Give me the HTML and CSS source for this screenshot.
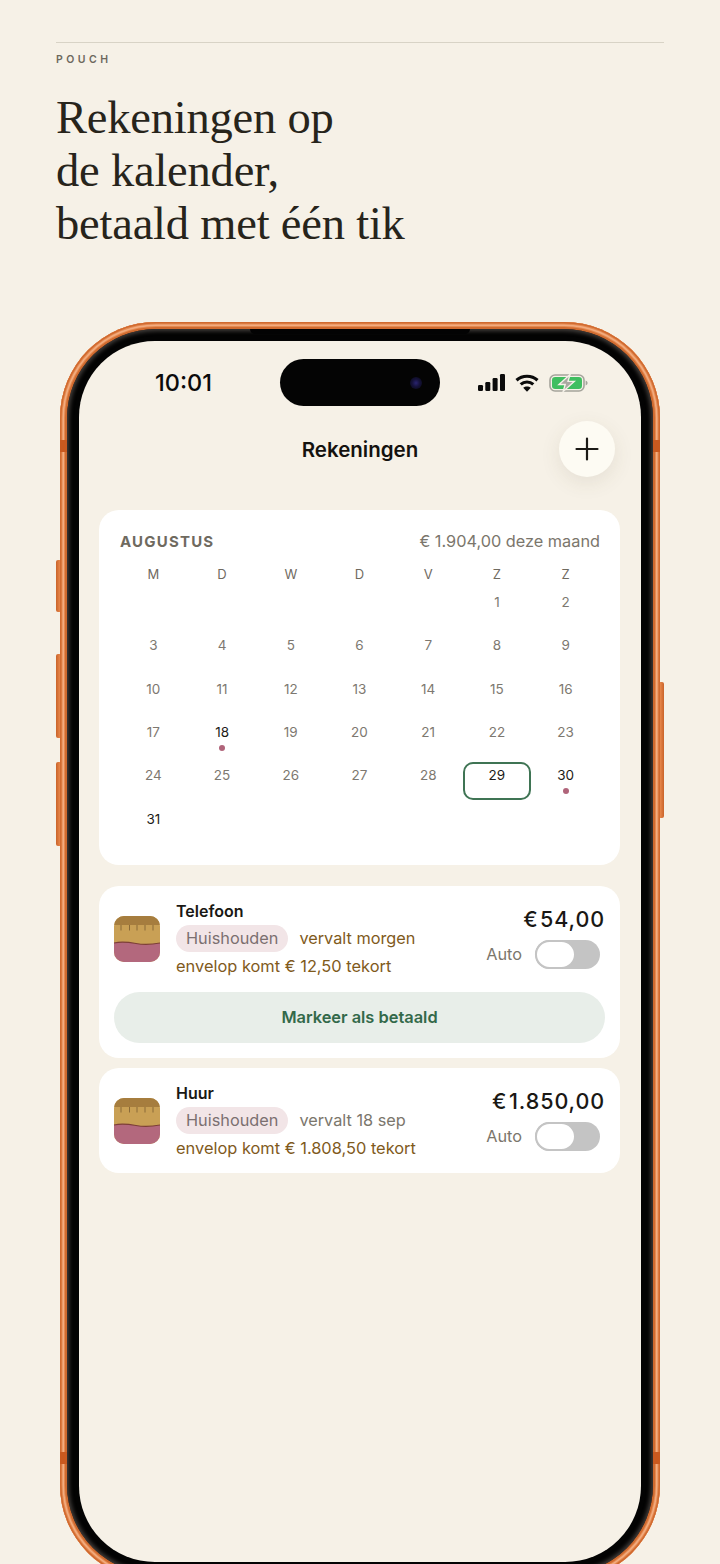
FILE: index.html
```html
<!DOCTYPE html>
<html lang="nl">
<head>
<meta charset="UTF-8" />
<meta name="viewport" content="width=device-width, initial-scale=1.0"/>
<title>Pouch - Rekeningen</title>
<link rel="stylesheet" href="styles.css">
</head>
<body>

<header class="intro">
  <div class="brand">POUCH</div>
  <h1>Rekeningen op<br>de kalender,<br>betaald met één tik</h1>
</header>

<div class="phone">
  <span class="side-btn btn-a"></span>
  <span class="side-btn btn-b"></span>
  <span class="side-btn btn-c"></span>
  <span class="side-btn btn-d"></span>
  <span class="band band-tl"></span>
  <span class="band band-tr"></span>
  <span class="band band-bl"></span>
  <span class="band band-br"></span>

  <div class="bezel">
    <span class="speaker"></span>
    <div class="screen">

      <div class="status">
        <div class="time">10:01</div>
        <div class="island"><span class="lens"></span></div>
        <div class="status-icons">
          <svg width="27" height="17" viewBox="0 0 27 17" fill="#0b0b0b">
            <rect x="0" y="11" width="5" height="6" rx="1.2"/>
            <rect x="7.3" y="8" width="5" height="9" rx="1.2"/>
            <rect x="14.6" y="4" width="5" height="13" rx="1.2"/>
            <rect x="22" y="0" width="5" height="17" rx="1.2"/>
          </svg>
          <svg width="24" height="18" viewBox="0 0 24 18" fill="none" stroke="#0b0b0b" stroke-width="3.200">
            <path d="M1.500 6.200C7.400 .9 16.600 .9 22.500 6.200"/>
            <path d="M5.700 10.400c3.600-3.200 9-3.200 12.600 0"/>
            <path d="M12 17.800l-3.800-4.100c2.100-1.700 5.500-1.700 7.600 0z" fill="#0b0b0b" stroke="none"/>
          </svg>
          <svg width="39" height="18" viewBox="0 0 39 18">
            <rect x="1" y="1" width="34" height="16" rx="5" fill="none" stroke="#a5a49c" stroke-width="1.600"/>
            <rect x="3" y="3" width="30" height="12" rx="3.200" fill="#3fbe60"/>
            <path d="M36.600 6.500c1.200.4 2 1.400 2 2.500s-.8 2.100-2 2.500z" fill="#a5a49c"/>
            <path d="M21 .6L10 10.500h6.200l-2 6.900 11-10h-6.200z" fill="#a9a9a2" stroke="#f5f1e8" stroke-width="1.400"/>
          </svg>
        </div>
      </div>

      <div class="nav">
        <div class="nav-title">Rekeningen</div>
        <button class="add" type="button" aria-label="Toevoegen">
          <svg width="24" height="24" viewBox="0 0 24 24" stroke="#1c1a16" stroke-width="2.200" stroke-linecap="round">
            <path d="M12 1.500v21M1.500 12h21"/>
          </svg>
        </button>
      </div>

      <section class="calendar">
        <div class="cal-head">
          <span class="month">AUGUSTUS</span>
          <span class="month-total">€ 1.904,00 deze maand</span>
        </div>
        <div class="weekdays">
          <span>M</span><span>D</span><span>W</span><span>D</span><span>V</span><span>Z</span><span>Z</span>
        </div>
        <div class="days">
          <div class="day"></div><div class="day"></div><div class="day"></div><div class="day"></div><div class="day"></div>
          <div class="day">1</div><div class="day">2</div>
          <div class="day">3</div><div class="day">4</div><div class="day">5</div><div class="day">6</div><div class="day">7</div><div class="day">8</div><div class="day">9</div>
          <div class="day">10</div><div class="day">11</div><div class="day">12</div><div class="day">13</div><div class="day">14</div><div class="day">15</div><div class="day">16</div>
          <div class="day">17</div><div class="day due">18<i class="dot"></i></div><div class="day">19</div><div class="day">20</div><div class="day">21</div><div class="day">22</div><div class="day">23</div>
          <div class="day">24</div><div class="day">25</div><div class="day">26</div><div class="day">27</div><div class="day">28</div><div class="day today">29</div><div class="day due">30<i class="dot"></i></div>
          <div class="day due">31</div>
        </div>
      </section>

      <section class="bill">
        <div class="bill-row">
          <svg class="pouch" width="46" height="46" viewBox="0 0 46 46">
            <defs><clipPath id="pouch-a"><rect width="46" height="46" rx="10"/></clipPath></defs>
            <g clip-path="url(#pouch-a)">
              <rect width="46" height="46" fill="#c9a055"/>
              <rect width="46" height="9" fill="#a67d3e"/>
              <path d="M0 27c8-2 14-1 22 .5s16 1 24-.5v20H0z" fill="#b3687d"/>
              <path d="M0 27c8-2 14-1 22 .5s16 1 24-.5" fill="none" stroke="#7d3f38" stroke-width="1.200"/>
              <path d="M7 9v5.500M15.500 9v5.500M23 9v5.500M31 9v5.500M39 9v5.500" stroke="#8a6a38" stroke-width="1"/>
            </g>
          </svg>
          <div class="bill-info">
            <div class="bill-name">Telefoon</div>
            <div class="bill-meta"><span class="chip">Huishouden</span><span class="due-text">vervalt morgen</span></div>
            <div class="short">envelop komt € 12,50 tekort</div>
          </div>
          <div class="bill-side">
            <div class="amount">€ 54,00</div>
            <div class="auto"><span>Auto</span><span class="toggle"></span></div>
          </div>
        </div>
        <button class="pay" type="button">Markeer als betaald</button>
      </section>

      <section class="bill">
        <div class="bill-row">
          <svg class="pouch" width="46" height="46" viewBox="0 0 46 46">
            <defs><clipPath id="pouch-b"><rect width="46" height="46" rx="10"/></clipPath></defs>
            <g clip-path="url(#pouch-b)">
              <rect width="46" height="46" fill="#c9a055"/>
              <rect width="46" height="9" fill="#a67d3e"/>
              <path d="M0 27c8-2 14-1 22 .5s16 1 24-.5v20H0z" fill="#b3687d"/>
              <path d="M0 27c8-2 14-1 22 .5s16 1 24-.5" fill="none" stroke="#7d3f38" stroke-width="1.200"/>
              <path d="M7 9v5.500M15.500 9v5.500M23 9v5.500M31 9v5.500M39 9v5.500" stroke="#8a6a38" stroke-width="1"/>
            </g>
          </svg>
          <div class="bill-info">
            <div class="bill-name">Huur</div>
            <div class="bill-meta"><span class="chip">Huishouden</span><span class="due-text plain">vervalt 18 sep</span></div>
            <div class="short">envelop komt € 1.808,50 tekort</div>
          </div>
          <div class="bill-side">
            <div class="amount">€ 1.850,00</div>
            <div class="auto"><span>Auto</span><span class="toggle"></span></div>
          </div>
        </div>
      </section>

    </div>
  </div>
</div>

</body>
</html>
```

FILE: styles.css
```css
html, body {
  margin: 0;
  height: 1564px;
  overflow: hidden;
}

body {
  background: #f6f1e7;
  font-family: Inter, "Noto Sans", sans-serif;
  color: #1a1814;
}

/* intro */
.intro {
  margin: 42px 56px 0;
  border-top: 1px solid #d8d3c6;
  padding-top: 10px;
}

.brand {
  font-size: 10.500px;
  line-height: 14px;
  font-weight: 600;
  letter-spacing: 0.33em;
  color: #6d685d;
}

h1 {
  margin: 24px 0 0;
  font-family: "Liberation Serif", serif;
  font-weight: 400;
  font-size: 46.500px;
  line-height: 53px;
  letter-spacing: -0.2px;
  color: #27241b;
}

/* phone frame */
.phone {
  position: relative;
  width: 600px;
  height: 1259px;
  margin: 72px 0 0 60px;
  padding: 7px;
  box-sizing: border-box;
  border-radius: 96px;
  background: #cf6a2f;
  box-shadow: inset 0 0 0 1.500px #d06a30, inset 0 0 0 2.500px #e58a50, inset 0 0 0 4px #f2ac80, inset 0 0 0 5px #e58a50;
}

.side-btn {
  position: absolute;
  width: 4px;
  background: linear-gradient(90deg, #c9632a, #e8874a);
  border-radius: 2px 0 0 2px;
}

.btn-a { left: -4px; top: 238px; height: 52px; }
.btn-b { left: -4px; top: 332px; height: 84px; }
.btn-c { left: -4px; top: 440px; height: 84px; }
.btn-d {
  right: -4px;
  top: 360px;
  height: 136px;
  border-radius: 0 2px 2px 0;
  background: linear-gradient(90deg, #e8874a, #c9632a);
}

.band {
  position: absolute;
  width: 7px;
  height: 12px;
  background: #c9591f;
}

.band-tl { left: 0; top: 118px; }
.band-tr { right: 0; top: 118px; }
.band-bl { left: 0; top: 1130px; }
.band-br { right: 0; top: 1130px; }

.bezel {
  position: relative;
  height: 100%;
  padding: 12px;
  box-sizing: border-box;
  border-radius: 89px;
  background: #030303;
  box-shadow: inset 0 0 4px 2px #45413e;
}

.speaker {
  position: absolute;
  left: 183px;
  top: 0;
  width: 220px;
  height: 5px;
  background: #030303;
  border-radius: 0 0 6px 6px;
}

.screen {
  position: relative;
  height: 100%;
  border-radius: 76px;
  background: #f6f1e7;
  overflow: hidden;
}

/* status bar */
.status {
  display: grid;
  grid-template-columns: 201px 160px 1fr;
  height: 47px;
  padding-top: 18px;
  align-items: center;
}

.time {
  padding-left: 76px;
  font-size: 23.500px;
  font-weight: 500;
  color: #0b0b0b;
}

.island {
  display: flex;
  align-items: center;
  justify-content: flex-end;
  height: 47px;
  padding-right: 18px;
  box-sizing: border-box;
  border-radius: 24px;
  background: #040404;
}

.lens {
  width: 12px;
  height: 12px;
  border-radius: 50%;
  background: radial-gradient(circle, #2a2470 0, #15123a 45%, #070710 100%);
}

.status-icons {
  display: flex;
  align-items: center;
  gap: 10px;
  padding-left: 38px;
}

/* nav */
.nav {
  display: flex;
  justify-content: center;
  align-items: center;
  position: relative;
  height: 56px;
  margin-top: 15px;
}

.nav-title {
  font-size: 20.500px;
  font-weight: 600;
  color: #14120f;
}

.add {
  position: absolute;
  right: 26px;
  top: 0;
  display: flex;
  align-items: center;
  justify-content: center;
  width: 56px;
  height: 56px;
  padding: 0;
  border: none;
  border-radius: 50%;
  background: #fdfbf3;
  box-shadow: 0 6px 20px rgba(90, 75, 50, 0.1);
}

/* calendar */
.calendar {
  margin: 33px 21px 0 20px;
  padding: 21px 20px 21px 20px;
  background: #fff;
  border-radius: 20px;
}

.cal-head {
  display: flex;
  justify-content: space-between;
  align-items: center;
  height: 20px;
}

.month {
  padding-left: 1px;
  font-size: 15px;
  font-weight: 700;
  letter-spacing: 0.08em;
  color: #6f6a5f;
}

.month-total {
  font-size: 16.300px;
  color: #7b766c;
}

.weekdays {
  display: grid;
  grid-template-columns: repeat(7, 1fr);
  height: 20px;
  margin-top: 13px;
  line-height: 20px;
  text-align: center;
  font-size: 13px;
  font-weight: 400;
  color: #6f6a5f;
}

.days {
  display: grid;
  grid-template-columns: repeat(7, 1fr);
  grid-auto-rows: 38px;
  row-gap: 5.400px;
  margin-top: 4.800px;
}

.day {
  display: flex;
  flex-direction: column;
  align-items: center;
  padding-top: 4px;
  font-size: 13.500px;
  line-height: 18px;
  color: #7d7870;
}

.due {
  color: #1d1b17;
}

.today {
  color: #1d1b17;
  border-radius: 10px;
  box-shadow: inset 0 0 0 2px #3f7454;
}

.dot {
  width: 6px;
  height: 6px;
  margin-top: 4px;
  border-radius: 50%;
  background: #b0647a;
}

/* bills */
.bill {
  margin: 10px 21px 0 20px;
  padding: 15px;
  background: #fff;
  border-radius: 20px;
}

.calendar + .bill {
  margin-top: 21px;
}

.bill-row {
  display: flex;
  align-items: center;
  height: 75px;
}

.pouch {
  flex: none;
  margin-top: 1px;
}

.bill-info {
  flex: 1;
  margin-left: 16px;
}

.bill-name {
  font-size: 16px;
  line-height: 20px;
  font-weight: 600;
  color: #1a1814;
}

.bill-meta {
  display: flex;
  align-items: center;
  gap: 11px;
  margin-top: 4px;
}

.chip {
  padding: 0 10px;
  height: 27px;
  line-height: 27px;
  border-radius: 14px;
  background: #f2e5e7;
  font-size: 16.300px;
  color: #7b6f70;
}

.due-text {
  font-size: 16.300px;
  color: #7f5a1c;
}

.due-text.plain {
  color: #7b766c;
}

.short {
  margin-top: 4px;
  font-size: 16.400px;
  line-height: 20px;
  color: #7f5a1c;
}

.bill-side {
  display: flex;
  flex-direction: column;
  align-items: flex-end;
  align-self: flex-start;
  padding-top: 5px;
}

.amount {
  font-size: 21.500px;
  line-height: 26px;
  font-weight: 500;
  letter-spacing: 0.9px;
  word-spacing: -5px;
  color: #1a1814;
}

.auto {
  display: flex;
  align-items: center;
  gap: 13px;
  margin: 8px 5px 0 0;
  font-size: 16.300px;
  color: #7b766c;
}

.toggle {
  position: relative;
  width: 65px;
  height: 29px;
  border-radius: 15px;
  background: #c4c4c4;
}

.toggle::after {
  content: "";
  position: absolute;
  left: 0;
  top: 0;
  width: 41px;
  height: 29px;
  box-sizing: border-box;
  border: 2px solid #c4c4c4;
  border-radius: 15px;
  background: #fff;
}

.pay {
  display: block;
  width: 100%;
  height: 51px;
  margin-top: 16px;
  border: none;
  border-radius: 26px;
  background: #e8eee9;
  font-family: inherit;
  font-size: 16.400px;
  font-weight: 600;
  color: #33694a;
}
```
